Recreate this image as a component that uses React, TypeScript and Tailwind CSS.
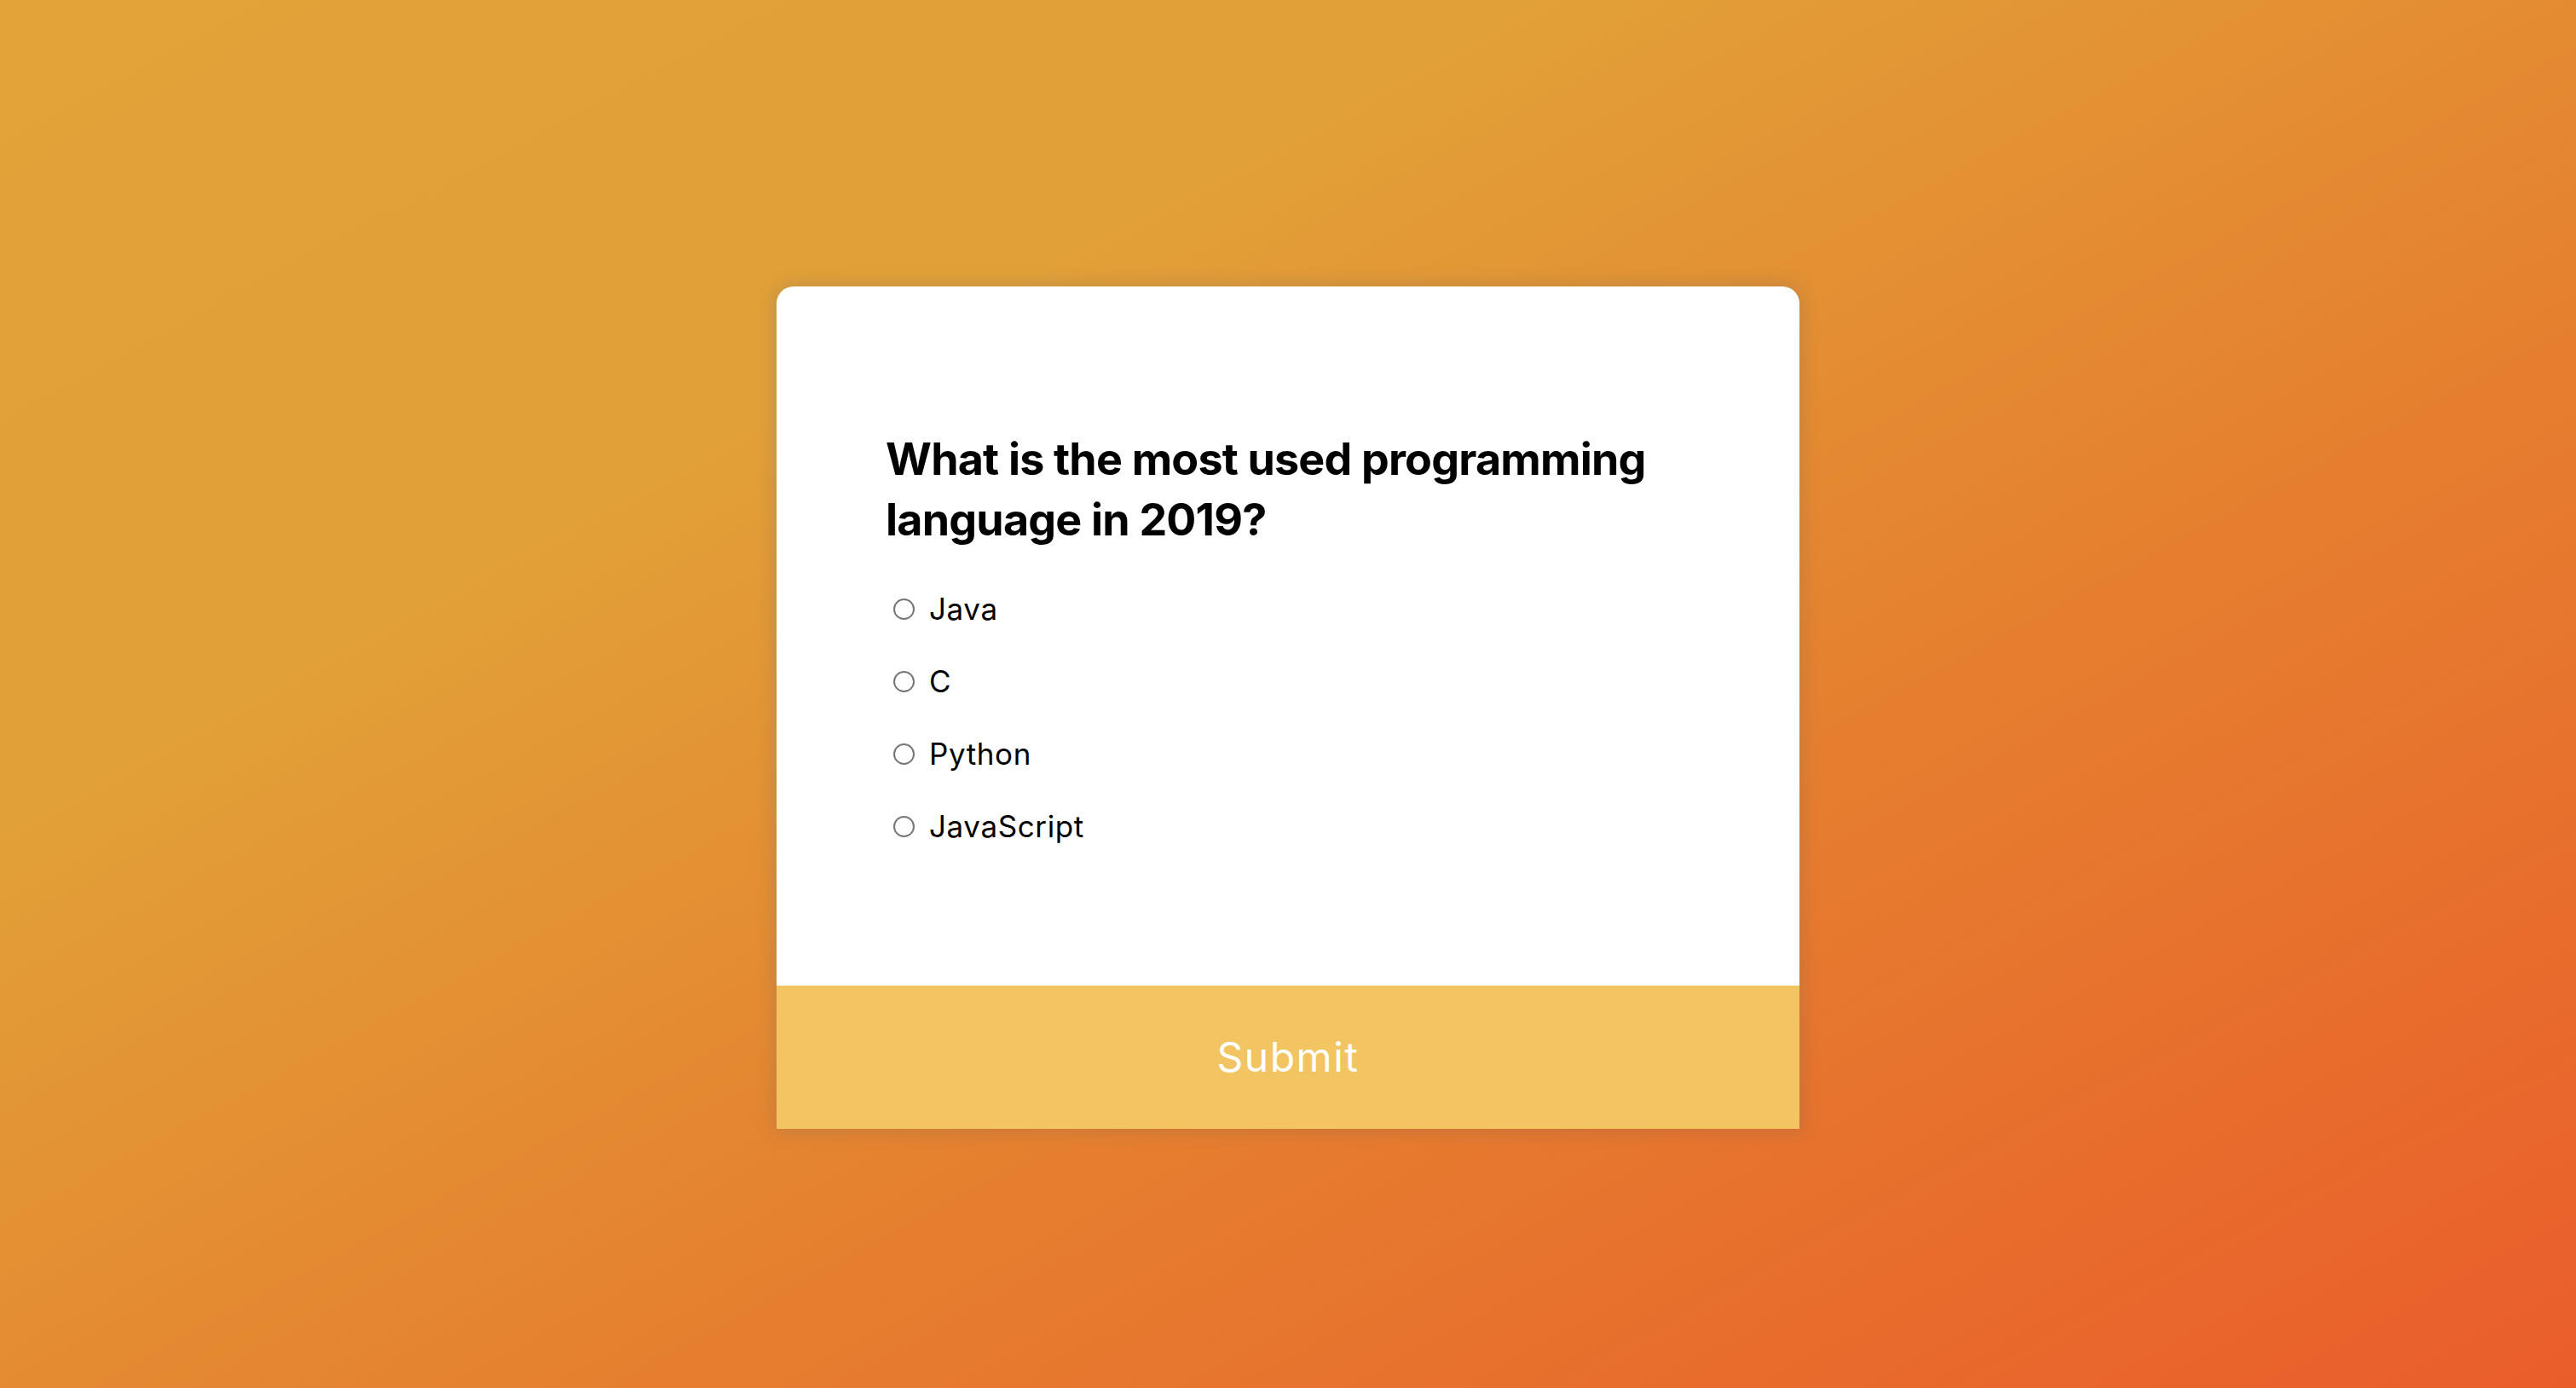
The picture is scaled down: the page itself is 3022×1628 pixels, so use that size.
import { useState } from 'react'

const options = ['Java', 'C', 'Python', 'JavaScript']

const App = () => {
    const [answer, setAnswer] = useState<string | null>(null)

    return (
        <div
            className="min-h-screen w-full flex flex-col items-center pt-[336px] bg-[linear-gradient(to_bottom_right,#e2a339,#e2a038_30%,#e5812f_60%,#ea5d2b)]"
            style={{ fontFamily: 'Inter, "Noto Sans", sans-serif' }}
        >
            <div className="w-[1200px] bg-white rounded-t-[20px] shadow-[0_0_20px_4px_rgba(100,100,100,0.22)]">
                <div className="px-[128px] pt-[167px] pb-[144px]">
                    <h2 className="text-[52px] leading-[71px] font-bold text-black tracking-[-0.8px]">
                        What is the most used programming language in 2019?
                    </h2>
                    <ul className="mt-[27px]">
                        {options.map((opt) => (
                            <li key={opt} className="h-[85px] flex items-center">
                                <label className="flex items-center cursor-pointer" onClick={() => setAnswer(opt)}>
                                    <span className="ml-[9px] w-[25px] h-[25px] rounded-full border-2 border-[#767676] flex items-center justify-center">
                                        {answer === opt && <span className="w-[13px] h-[13px] rounded-full bg-[#0075ff]" />}
                                    </span>
                                    <span className="ml-[17px] text-[35px] leading-[85px] tracking-[0.6px] text-black">{opt}</span>
                                </label>
                            </li>
                        ))}
                    </ul>
                </div>
                <button className="w-full h-[168px] bg-[#f3c462] text-white text-[48px] tracking-[1.5px] font-normal flex items-center justify-center">
                    Submit
                </button>
            </div>
        </div>
    )
}

export default App
